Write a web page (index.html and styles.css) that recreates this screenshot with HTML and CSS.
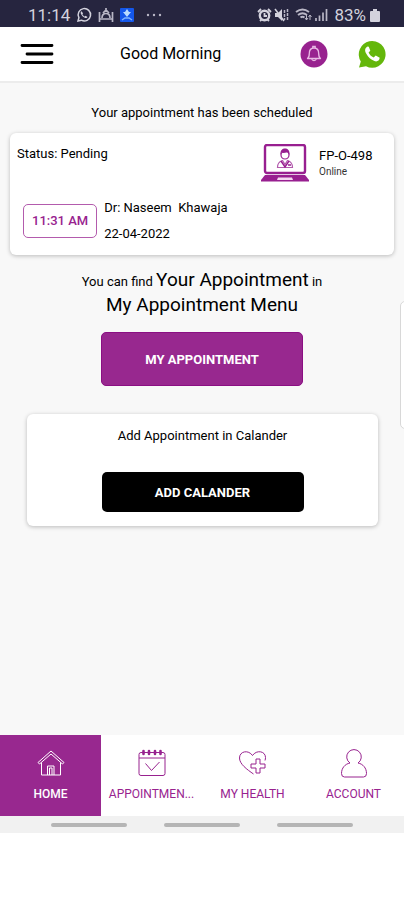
FILE: index.html
```html
<!doctype html>
<html lang="en">
  <head>
    <meta charset="utf-8">
    <meta name="viewport" content="width=device-width, initial-scale=1">
    <title>Appointment</title>
    <link rel="stylesheet" href="styles.css">
  </head>
<body>

<div class="app">

  <div class="statusBar">
    <span>11:14</span>
    <svg class="statusIcon" width="16" height="16" viewBox="0 0 16 16">
      <path d="M2 14l.9-3.3A6.2 6.2 0 1 1 5.400 13.200z" fill="none" stroke="#d3d2dd" stroke-width="1.500"/>
      <path d="M5.400 4.300c-.8.600-.9 1.600-.4 2.700.9 1.900 2.400 3.300 4.200 3.900 1 .3 2-.1 2.300-1l-1.900-1.200-.9.800c-1-.4-1.900-1.300-2.300-2.300l.7-.9z" fill="#d3d2dd"/>
    </svg>
    <svg class="statusIcon" width="16" height="16" viewBox="0 0 16 16">
      <path d="M1.500 5v10M14.500 5v10M2 12h12M4 11c0-3 1.500-4.500 4-4.500s4 1.500 4 4.500M5 6l3-3 3 3M8 3V1" fill="none" stroke="#b9b7c6" stroke-width="1.700"/>
    </svg>
    <svg class="statusIcon" width="14" height="14" viewBox="0 0 14 14">
      <rect width="14" height="14" rx="1" fill="#1457ea"/>
      <path d="M7 1l2 3h2L7 9 3 4h2z" fill="#b9dcff"/>
      <path d="M2 12l3-2h4l3 2" stroke="#7fb4ff" stroke-width="1.500" fill="none"/>
    </svg>
    <svg class="dots" width="16" height="4" viewBox="0 0 16 4">
      <g fill="#b9b7c6"><circle cx="2" cy="2" r="1.200"/><circle cx="8" cy="2" r="1.200"/><circle cx="14" cy="2" r="1.200"/></g>
    </svg>

    <div class="statusRight">
      <svg width="15" height="16" viewBox="0 0 15 16">
        <circle cx="7.500" cy="8.500" r="4.700" fill="none" stroke="#d3d2dd" stroke-width="2.400"/>
        <path d="M1 5l3-3M14 5l-3-3M3 14l1.500-1.500M12 14l-1.500-1.500M7.500 6v3h2.500" fill="none" stroke="#d3d2dd" stroke-width="1.800"/>
      </svg>
      <svg width="15" height="16" viewBox="0 0 15 16">
        <path d="M1 6h3l4-4v12l-4-4H1z" fill="#d3d2dd"/>
        <path d="M1 2l9 12" stroke="#d3d2dd" stroke-width="1.600"/>
        <path d="M10.500 3v10M13.500 2v12" stroke="#b9b7c6" stroke-width="1.500" stroke-dasharray="3 1"/>
      </svg>
      <svg class="wifi" width="18" height="16" viewBox="0 0 18 16">
        <path d="M1 5q6.500-5 13 0M3 8q4.500-3.500 9 0M5.500 10.500q2-1.500 4 0" fill="none" stroke="#b9b7c6" stroke-width="1.900"/>
        <path d="M11.500 8v5M15 13V8M10 11l1.500 2 1.500-2M13.500 10L15 8l1.500 2" fill="none" stroke="#b9b7c6"/>
      </svg>
      <svg width="13" height="16" viewBox="0 0 13 16">
        <path d="M1 14v-3M4.500 14V8.500M8 14V5.500M11.500 14V2" stroke="#b9b7c6" stroke-width="1.700"/>
      </svg>
      <span>83%</span>
      <svg width="10" height="13" viewBox="0 0 10 13">
        <path d="M3 0h4v2h2q1 0 1 1v9q0 1-1 1H1q-1 0-1-1V3q0-1 1-1h2z" fill="#d3d2dd"/>
      </svg>
    </div>
  </div>

  <header class="header">
    <button class="iconButton" aria-label="Menu">
      <svg width="34" height="22" viewBox="0 0 34 22">
        <path d="M2 2.500h30M7 11h25M2 19.500h30" stroke="#000" stroke-width="2.800" stroke-linecap="round"/>
      </svg>
    </button>
    <h1 class="title">Good Morning</h1>
    <button class="iconButton" aria-label="Notifications">
      <svg width="28" height="28" viewBox="0 0 28 28">
        <circle cx="14" cy="14" r="13.500" fill="#98228f"/>
        <path d="M7.500 18.500c1.500-1 1.800-2.300 1.800-5 0-3.300 1.700-5.500 4.700-5.500s4.700 2.200 4.700 5.500c0 2.700.3 4 1.800 5z" fill="none" stroke="#e8b9e4" stroke-width="1.300" stroke-linejoin="round"/>
        <path d="M12.800 8V6.500h2.400V8M11.800 19c.3 2 4.100 2 4.400 0" fill="none" stroke="#e8b9e4" stroke-width="1.300"/>
      </svg>
    </button>
    <button class="iconButton" aria-label="WhatsApp">
      <svg width="28" height="28" viewBox="0 0 28 28">
        <path d="M1 27.500l1.800-6A13.400 13.400 0 1 1 8 26.300z" fill="#64b70b"/>
        <path d="M9.500 6.500c-3 1.700-2.800 4.500-1.200 7.300 2 3.600 4.500 5.900 8.200 7.300 2.500.9 5-.3 5.200-3.300l-4-2.300-2 2c-2.500-1-4.200-2.700-5.100-4.900l1.700-1.900-1.500-4z" fill="#fff"/>
      </svg>
    </button>
  </header>

  <main class="main">
    <p class="text">Your appointment has been scheduled</p>

    <section class="card appointment">
      <div class="cardRow">
        <span class="state">Status: Pending</span>
        <svg width="48" height="38" viewBox="0 0 48 38">
          <rect x="4" y="1" width="40" height="28" rx="2" fill="#fff" stroke="#981f90" stroke-width="2.400"/>
          <path d="M4 31h40l4 5v1.500H0V36z" fill="#981f90"/>
          <path d="M17 33.500h14l1 2.500H16z" fill="#f4d9f1"/>
          <circle cx="24" cy="11" r="4" fill="#fff" stroke="#981f90" stroke-width="1.200"/>
          <path d="M19.500 11c-.5-5 2-6.500 4.500-6.500s5 1.500 4.500 6.500c-1-2-1.500-2.500-3-2.500-2 .5-4 .5-5 0z" fill="#981f90"/>
          <path d="M16.500 23.500c0-4 1.500-6 5-7l2.500 4 2.500-4c3.500 1 5 3 5 7z" fill="#fff" stroke="#b35bad" stroke-width="1.200"/>
          <path d="M20 17l4 6 4-6M27 21h3" fill="none" stroke="#981f90" stroke-width="1.400"/>
        </svg>
        <div class="ref">
          <div>FP-O-498</div>
          <div class="small">Online</div>
        </div>
      </div>
      <div class="cardRow bottom">
        <div class="time">11:31 AM</div>
        <div class="doctor">
          <div>Dr: Naseem&nbsp; Khawaja</div>
          <div>22-04-2022</div>
        </div>
      </div>
    </section>

    <p class="find">You can find <span class="big">Your Appointment</span> in<br><span class="big">My Appointment Menu</span></p>

    <button class="button purple">MY APPOINTMENT</button>

    <section class="card calendar">
      <p class="text">Add Appointment in Calander</p>
      <button class="button black">ADD CALANDER</button>
    </section>

    <div class="edgePanel"></div>
  </main>

  <nav class="nav">
    <a class="navItem active" href="#home">
      <svg width="30" height="30" viewBox="0 0 30 30">
        <path d="M2 14.500L15 3l13 11.500-1.500 1.500L15 6 3.500 16zM5.500 14.500V27h19V14.500M11.500 27v-9h6.500v9M13.500 27v-7h2.500v7" fill="none" stroke="#fff"/>
      </svg>
      <span>HOME</span>
    </a>
    <a class="navItem" href="#appointments">
      <svg width="30" height="30" viewBox="0 0 30 30">
        <rect x="2" y="4.500" width="26" height="23" rx="2" fill="none" stroke="#98228f"/>
        <path d="M2 10h26M8.500 15.500l6 7 8-8.500" fill="none" stroke="#98228f"/>
        <path d="M6.500 3v3M12 3v3M18 3v3M23.500 3v3" stroke="#98228f" stroke-width="2.600" stroke-linecap="round"/>
      </svg>
      <span>APPOINTMEN...</span>
    </a>
    <a class="navItem" href="#health">
      <svg width="30" height="30" viewBox="0 0 30 30">
        <path d="M15.500 26C9 21.500 1.500 16 1.500 10c0-7 9-8.500 13-2.500 4-6 13-4.500 13 2 0 1-.2 2-.5 3" fill="none" stroke="#98228f"/>
        <path d="M18 11h4v5h5v4h-5v5h-4v-5h-5v-4h5z" fill="none" stroke="#98228f" stroke-linejoin="round"/>
      </svg>
      <span>MY HEALTH</span>
    </a>
    <a class="navItem" href="#account">
      <svg width="30" height="30" viewBox="0 0 30 30">
        <path d="M11 15a7.300 7.300 0 1 1 8 0c5 1 8.500 5 8.500 10.500q0 3.500-3 3.500h-19q-3 0-3-3.500C2.500 20 6 16 11 15z" fill="none" stroke="#98228f" stroke-linejoin="round"/>
      </svg>
      <span>ACCOUNT</span>
    </a>
  </nav>

  <div class="gestureBar"><i></i><i></i><i></i></div>
</div>

</body>
</html>
```
FILE: styles.css
```css
*{
  box-sizing: border-box;
}
body{
  margin: 0;
  background: #fff;
  color: #000;
  font-family: Roboto, "Liberation Sans", sans-serif;
  font-size: 13px;
  line-height: 20px;
}
p, h1{
  margin: 0;
}
button{
  font-family: inherit;
  border: 0;
  cursor: pointer;
}
svg{
  display: block;
  flex: none;
}
.app{
  display: flex;
  flex-direction: column;
  min-height: 100vh;
  padding-bottom: 67px;
}

.statusBar{
  display: flex;
  align-items: center;
  gap: 6px;
  height: 27px;
  padding: 3px 24px 0 28px;
  background: #26253f;
  color: #d3d2dd;
  font-size: 17px;
}
.dots{
  margin-left: 6px;
}
.statusRight{
  display: flex;
  align-items: center;
  gap: 2px;
  margin-left: auto;
}
.statusRight span{
  margin: 0 2px 0 4px;
}
.wifi{
  margin-left: 4px;
}

.header{
  display: flex;
  align-items: center;
  height: 56px;
  padding: 0 18px 0 20px;
  background: #fff;
  border-bottom: 2px solid #ececec;
}
.iconButton{
  padding: 0;
  background: none;
}
.title{
  flex: 1;
  margin-left: 66px;
  font-size: 16px;
  font-weight: 400;
}
.iconButton + .iconButton{
  margin-left: 30px;
}

.main{
  position: relative;
  flex: 1;
  display: flex;
  flex-direction: column;
  align-items: center;
  padding: 20px 10px;
  background: #f8f8f8;
  overflow: hidden;
}
.text{
  text-align: center;
}
.card{
  background: #fff;
  border-radius: 6px;
  box-shadow: 0 1px 4px rgba(0,0,0,0.25);
}
.appointment{
  align-self: stretch;
  margin-top: 10px;
  padding: 11px 18px 8px 7px;
}
.cardRow{
  display: flex;
  align-items: flex-start;
}
.state{
  flex: 1;
}
.ref{
  width: 57px;
  margin: 3px 0 0 10px;
  line-height: 18px;
  white-space: nowrap;
}
.small{
  font-size: 10px;
  line-height: 14px;
  color: #333;
}
.bottom{
  align-items: center;
  gap: 7px;
  margin-top: 13px;
  padding-left: 6px;
}
.time{
  padding: 6px 8px;
  border: 1px solid #b35bad;
  border-radius: 5px;
  color: #98228f;
  font-weight: 500;
}
.doctor{
  line-height: 26px;
}
.find{
  margin-top: 14px;
  text-align: center;
  line-height: 25px;
}
.big{
  font-size: 19px;
  line-height: 20px;
}
.button{
  width: 202px;
  border-radius: 5px;
  color: #fff;
  font-size: 13px;
  font-weight: 700;
}
.purple{
  height: 54px;
  margin-top: 13px;
  background: #98288f;
  border: 1px solid #8b0f83;
}
.black{
  height: 40px;
  margin-top: 26px;
  background: #000;
}
.calendar{
  display: flex;
  flex-direction: column;
  align-items: center;
  align-self: stretch;
  margin: 28px 16px 0 17px;
  padding: 12px 0 14px;
}
/* handle that slides out from the right edge */
.edgePanel{
  position: absolute;
  top: 218px;
  right: -6px;
  width: 10px;
  height: 128px;
  background: #fff;
  border: 1px solid #d8d8d8;
  border-radius: 5px;
}

.nav{
  display: grid;
  grid-template-columns: repeat(4, 1fr);
  background: #fff;
}
.navItem{
  display: flex;
  flex-direction: column;
  align-items: center;
  gap: 6px;
  padding: 13px 4px 12px;
  color: #98228f;
  font-size: 12px;
  white-space: nowrap;
  text-decoration: none;
}
.navItem.active{
  background: #98288f;
  color: #fff;
  font-weight: 500;
}

.gestureBar{
  display: flex;
  justify-content: center;
  align-items: center;
  gap: 37px;
  height: 17px;
  background: #f1f1f1;
}
.gestureBar i{
  width: 76px;
  height: 4px;
  border-radius: 2px;
  background: #b5b5b5;
}
```
